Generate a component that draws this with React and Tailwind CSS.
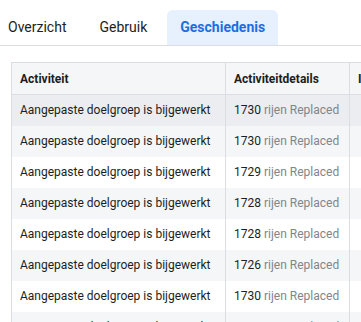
import React from "react";

const rows = [
  { activity: "Aangepaste doelgroep is bijgewerkt", count: 1730 },
  { activity: "Aangepaste doelgroep is bijgewerkt", count: 1730 },
  { activity: "Aangepaste doelgroep is bijgewerkt", count: 1729 },
  { activity: "Aangepaste doelgroep is bijgewerkt", count: 1728 },
  { activity: "Aangepaste doelgroep is bijgewerkt", count: 1728 },
  { activity: "Aangepaste doelgroep is bijgewerkt", count: 1726 },
  { activity: "Aangepaste doelgroep is bijgewerkt", count: 1730 },
  { activity: "Aangepaste doelgroep is bijgewerkt", count: 1730 },
];

const tabs = ["Overzicht", "Gebruik", "Geschiedenis"];

const App = () => {
  return (
    <div
      className="w-[361px] h-[322px] overflow-hidden bg-white text-[#1c1e21]"
      style={{ fontFamily: "Roboto, 'Liberation Sans', sans-serif" }}
    >
      {/* Tabs */}
      <div className="pt-[10px] border-b border-[#dadde1]">
        <div className="flex gap-[7px] -ml-[5px]">
          {tabs.map((tab) => (
            <div
              key={tab}
              className={`h-[35px] px-[13px] pb-px flex items-center rounded-t-md text-[14px] ${
                tab === "Geschiedenis"
                  ? "bg-[#e7f0fd] text-[#1b6fe0] font-bold"
                  : "text-[#1c1e21]"
              }`}
            >
              {tab}
            </div>
          ))}
        </div>
      </div>

      {/* History table */}
      <div className="mt-4 ml-[11px] overflow-hidden">
        <table className="w-[520px] border-collapse text-[12px] table-fixed">
          <thead>
            <tr className="bg-[#f5f6f7] h-[32px]">
              <th className="w-[214px] border border-[#dadde1] px-2 text-left font-bold">
                Activiteit
              </th>
              <th className="w-[124px] border border-[#dadde1] px-2 text-left font-bold">
                Activiteitdetails
              </th>
              <th className="border border-[#dadde1] px-2 text-left font-bold whitespace-nowrap">
                Interactie van
              </th>
            </tr>
          </thead>
          <tbody>
            {rows.map((row, i) => (
              <tr
                key={i}
                className={`h-[31px] ${
                  i === 0 ? "bg-[#ebedf0]" : i % 2 === 1 ? "bg-[#f5f6f7]" : "bg-white"
                }`}
              >
                <td className="border-l border-r border-[#dadde1] px-2 whitespace-nowrap">
                  {row.activity}
                </td>
                <td className="border-r border-[#dadde1] px-2 whitespace-nowrap">
                  {row.count} <span className="text-[#80868b]">rijen Replaced</span>
                </td>
                <td className="border-r border-[#dadde1] px-2"></td>
              </tr>
            ))}
          </tbody>
        </table>
      </div>
    </div>
  );
};

export default App;
